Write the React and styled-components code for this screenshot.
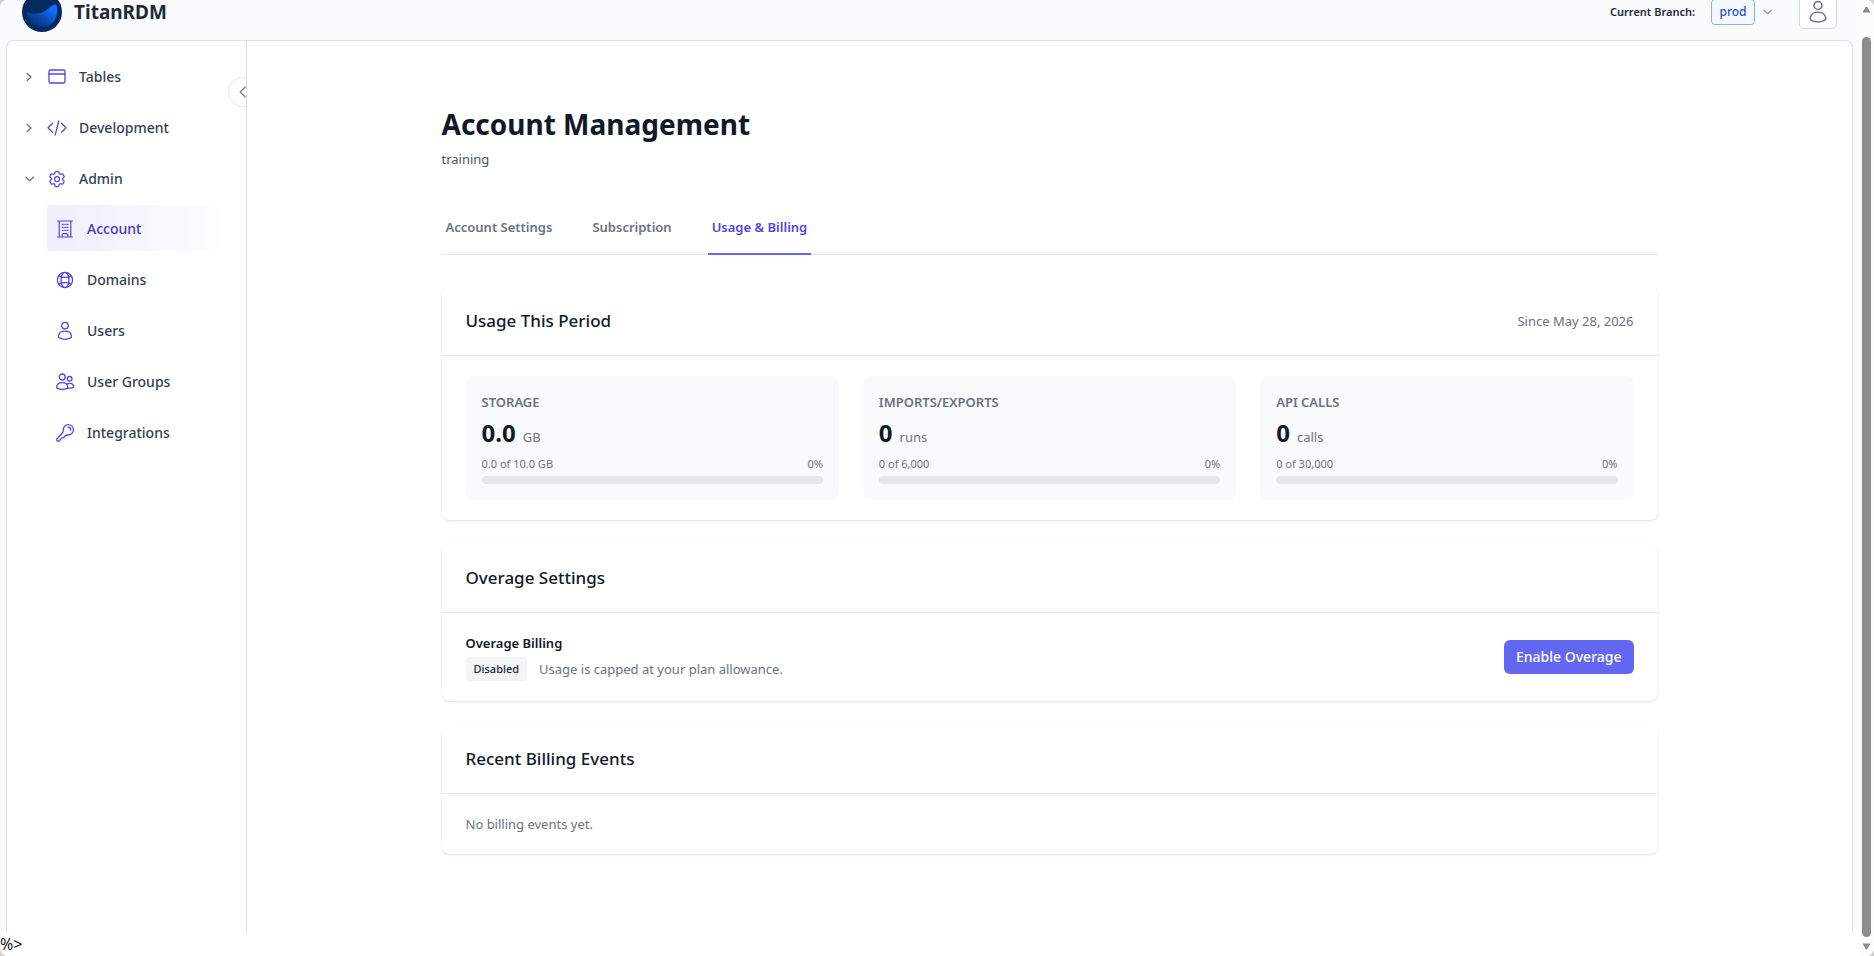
import React from "react";
import styled, { createGlobalStyle, css } from "styled-components";

const GlobalStyle = createGlobalStyle`
  *, *::before, *::after { box-sizing: border-box; }
  body {
    margin: 0;
    background: #cfcfd1;
    color: #111827;
    font-family: "Segoe UI", "Noto Sans", sans-serif;
    font-size: 13px;
    line-height: 20px;
  }
  h1, h2, h3, p, ul { margin: 0; padding: 0; }
  ul { list-style: none; }
  button { font: inherit; color: inherit; background: none; border: 0; padding: 0; cursor: pointer; }
  a { color: inherit; text-decoration: none; }
  svg { display: block; flex: none; }
`;

const labelText = css`
  font-size: 13px;
  font-weight: 600;
  line-height: 20px;
`;

/* Page frame */
const Window = styled.div`
  display: grid;
  grid-template-columns: minmax(0, 1fr) 15px;
  min-height: 100vh;
  border-radius: 8px;
  overflow: hidden;
  background: #fff;
`;

const Page = styled.div`
  display: flex;
  flex-direction: column;
`;

const ScrollTrack = styled.div`
  display: flex;
  flex-direction: column;
  align-items: center;
  gap: 24px;
  padding: 6px 0;
  background: #fcfcfc;
`;

const ScrollThumb = styled.div`
  flex: 1;
  width: 9px;
  border-radius: 5px;
  background: #8b8b8b;
`;

const ScrollBody = styled.div`
  flex: 1;
  display: flex;
  flex-direction: column;
  align-items: center;
  justify-content: space-between;
  gap: 6px;
`;

/* Header */
const Header = styled.header`
  display: flex;
  align-items: flex-end;
  height: 40px;
  padding: 0 22px 8px;
  overflow: hidden;
  background: #fafbfd;
`;

const HeaderRow = styled.div`
  flex: 1;
  display: flex;
  align-items: center;
  justify-content: space-between;
  height: 40px;
`;

const Brand = styled.a`
  display: flex;
  align-items: center;
  gap: 12px;
  font-size: 19px;
  font-weight: 700;
  line-height: 28px;
  color: #1f2937;
`;

const HeaderTools = styled.div`
  display: flex;
  align-items: center;
`;

const BranchLabel = styled.span`
  margin-right: 16px;
  font-size: 11px;
  font-weight: 600;
  color: #1f2937;
`;

const BranchButton = styled.button`
  display: flex;
  align-items: center;
  gap: 8px;
  margin-right: 26px;
  color: #9ca3af;
`;

const BranchName = styled.span`
  display: flex;
  align-items: center;
  justify-content: center;
  width: 44px;
  height: 26px;
  border: 1px solid #84b0f7;
  border-radius: 4px;
  background: #f5f9ff;
  color: #1d4ed8;
  font-size: 12px;
  font-weight: 500;
`;

const ProfileButton = styled.button`
  display: flex;
  align-items: center;
  justify-content: center;
  width: 38px;
  height: 34px;
  border: 1px solid #d1d5db;
  border-radius: 5px;
  background: #fff;
  color: #6b7280;
`;

/* Sidebar */
const Workspace = styled.div`
  flex: 1;
  display: flex;
  padding: 0 6px;
  background: #fafbfd;
`;

const Panel = styled.div`
  flex: 1;
  display: flex;
  border: 1px solid #dfe1e7;
  border-bottom: 0;
  border-radius: 8px 8px 0 0;
  background: #fff;
`;

const Sidebar = styled.nav`
  position: relative;
  flex: none;
  width: 240px;
  padding: 12px 11px 12px 0;
  border-right: 1px solid #dcdce4;
  overflow: hidden;
`;

const CollapseButton = styled.button`
  position: absolute;
  top: 36px;
  right: -12px;
  display: flex;
  align-items: center;
  justify-content: center;
  width: 30px;
  height: 30px;
  border: 1px solid #e2e4e9;
  border-radius: 50%;
  background: #fff;
  color: #7b818c;
`;

const NavList = styled.ul`
  display: flex;
  flex-direction: column;
  gap: 5px;
`;

const SubList = styled(NavList)`
  margin-top: 4px;
  margin-left: 40px;
`;

const navRow = css`
  display: flex;
  align-items: center;
  gap: 12px;
  width: 100%;
  height: 46px;
  border-radius: 4px;
  color: #374151;
  font-size: 14px;
  font-weight: 500;
  svg { color: #4f46e5; }
`;

const NavGroup = styled.button`
  ${navRow}
  padding: 2px 0 0 18px;
  text-align: left;
  svg:first-child { color: #6b7280; }
`;

const NavLink = styled.a`
  ${navRow}
  padding: 2px 0 0 8px;
  ${({ $active }) => $active && css`
    color: #4338ca;
    background: linear-gradient(to right, #eeeefd, #ffffff);
  `}
`;

/* Main content */
const Main = styled.main`
  flex: 1;
  min-width: 0;
  padding: 64px 32px;
`;

const Content = styled.div`
  max-width: 1216px;
  margin: 0 auto;
`;

const Title = styled.h1`
  font-size: 28px;
  font-weight: 700;
  line-height: 38px;
`;

const Subtitle = styled.p`
  margin-top: 6px;
  color: #4b5563;
`;

const Tabs = styled.div`
  display: flex;
  gap: 32px;
  margin: 32px 0;
  border-bottom: 1px solid #e5e7eb;
`;

const Tab = styled.button`
  ${labelText}
  margin-bottom: -1px;
  padding: 16px 4px;
  border-bottom: 2px solid ${({ $active }) => ($active ? "#6366f1" : "transparent")};
  color: ${({ $active }) => ($active ? "#4f46e5" : "#6b7280")};
`;

const CardStack = styled.div`
  display: flex;
  flex-direction: column;
  gap: 24px;
`;

const Card = styled.section`
  border-radius: 8px;
  background: #fff;
  box-shadow: 0 1px 3px rgba(0, 0, 0, 0.1), 0 1px 2px -1px rgba(0, 0, 0, 0.1);
`;

const CardHeader = styled.div`
  display: flex;
  align-items: center;
  justify-content: space-between;
  padding: 20px 24px;
  border-bottom: 1px solid #e5e7eb;
`;

const CardTitle = styled.h2`
  font-size: 17px;
  font-weight: 500;
  line-height: 28px;
`;

const Muted = styled.p`
  color: #6b7280;
`;

const CardBody = styled.div`
  padding: 20px 24px;
`;

const UsageGrid = styled(CardBody)`
  display: grid;
  grid-template-columns: repeat(3, minmax(0, 1fr));
  gap: 24px;
`;

const UsageTile = styled.div`
  padding: 16px;
  border-radius: 8px;
  background: #f9fafb;
  color: #6b7280;
`;

const UsageName = styled.h3`
  ${labelText}
  text-transform: uppercase;
`;

const UsageValue = styled.p`
  display: flex;
  align-items: baseline;
  gap: 7px;
  margin-top: 4px;
  line-height: 34px;
`;

const UsageNumber = styled.strong`
  color: #111827;
  font-size: 24px;
  font-weight: 700;
`;

const UsageQuota = styled.p`
  display: flex;
  justify-content: space-between;
  margin: 2px 0 4px;
  font-size: 11px;
  line-height: 16px;
`;

const Meter = styled.div`
  height: 8px;
  border-radius: 4px;
  background: #e5e7eb;
  overflow: hidden;
`;

const MeterFill = styled.div`
  height: 100%;
  background: #6366f1;
`;

const OverageBody = styled(CardBody)`
  display: flex;
  align-items: center;
  justify-content: space-between;
`;

const OverageName = styled.h3`
  ${labelText}
`;

const OverageStatus = styled.div`
  display: flex;
  align-items: center;
  gap: 12px;
  margin-top: 4px;
`;

const Badge = styled.span`
  padding: 4px 8px;
  border-radius: 4px;
  background: #f3f4f6;
  color: #1f2937;
  font-size: 11px;
  font-weight: 500;
  line-height: 16px;
`;

const PrimaryButton = styled.button`
  padding: 7px 12px;
  border-radius: 6px;
  background: #6366f1;
  color: #fff;
  font-size: 14px;
  font-weight: 500;
  line-height: 20px;
`;

const Footer = styled.footer`
  height: 24px;
  font-size: 16px;
  line-height: 24px;
`;

/* Icons */
const Glyph = ({ size = 20, box = 20, weight = 1.3, children }) => (
  <svg width={size} height={size} viewBox={`0 0 ${box} ${box}`} fill="none" stroke="currentColor"
    strokeWidth={weight} strokeLinecap="round" strokeLinejoin="round" aria-hidden="true">
    {children}
  </svg>
);

const ChevronRight = () => <Glyph size={10} box={10}><path d="M2.2 1.5 6 5 2.2 8.5" /></Glyph>;
const ChevronDown = () => <Glyph size={10} box={10}><path d="M1 3.2 4.700 6.800 8.400 3.200" /></Glyph>;
const ChevronLeft = () => <Glyph size={12} box={12}><path d="M8.2 1 3.2 6 8.2 11" /></Glyph>;

const TableIcon = () => (
  <Glyph><rect x="2" y="3" width="16" height="13" rx="1.6" /><path d="M2 7h16" /></Glyph>
);
const CodeIcon = () => (
  <Glyph><path d="M5.6 5.2 1 9.8l4.6 4.6M14.4 5.2 19 9.8l-4.6 4.6M11.8 3 8.2 16.8" /></Glyph>
);
const GearIcon = () => (
  <Glyph box={24} weight={1.5}>
    <path d="M9.594 3.94c.09-.542.56-.94 1.11-.94h2.593c.55 0 1.02.398 1.11.94l.213 1.281c.063.374.313.686.645.87.074.04.147.083.22.127.325.196.72.257 1.075.124l1.217-.456a1.125 1.125 0 0 1 1.37.49l1.296 2.247a1.125 1.125 0 0 1-.26 1.431l-1.003.827c-.293.241-.438.613-.43.992a7.7 7.7 0 0 1 0 .255c-.008.378.137.75.43.991l1.004.827c.424.35.534.955.26 1.43l-1.298 2.247a1.125 1.125 0 0 1-1.369.491l-1.217-.456c-.355-.133-.75-.072-1.076.124a6.5 6.5 0 0 1-.22.128c-.331.183-.581.495-.644.869l-.213 1.281c-.09.543-.56.94-1.11.94h-2.594c-.55 0-1.019-.398-1.11-.94l-.213-1.281c-.062-.374-.312-.686-.644-.87a6.5 6.5 0 0 1-.22-.127c-.325-.196-.72-.257-1.076-.124l-1.217.456a1.125 1.125 0 0 1-1.369-.49l-1.297-2.247a1.125 1.125 0 0 1 .26-1.431l1.004-.827c.292-.24.437-.613.43-.991a7 7 0 0 1 0-.255c.007-.38-.138-.751-.43-.992l-1.004-.827a1.125 1.125 0 0 1-.26-1.43l1.297-2.247a1.125 1.125 0 0 1 1.37-.491l1.216.456c.356.133.751.072 1.076-.124.072-.044.146-.086.22-.128.332-.183.582-.495.644-.869z" />
    <circle cx="12" cy="12" r="3" />
  </Glyph>
);
const BuildingIcon = () => (
  <Glyph weight={1.2}>
    <path d="M2.6 2h14.8M2.6 18h14.8M4.2 2v16M15.8 2v16M7.2 18v-2.2a1.2 1.2 0 0 1 1.2-1.2h3.2a1.2 1.2 0 0 1 1.2 1.2V18" />
    <path d="M7.2 5.3h1M9.7 5.3h.8M12 5.3h1M7.2 8.3h1M9.7 8.3h.8M12 8.3h1M7.2 11.3h1M9.7 11.3h.8M12 11.3h1" />
  </Glyph>
);
const GlobeIcon = () => (
  <Glyph>
    <circle cx="10" cy="10" r="7.6" /><ellipse cx="10" cy="10" rx="4" ry="7.6" />
    <path d="M3.6 6.2c3.8 1.5 9 1.5 12.8 0M3.6 13.8c3.8-1.5 9-1.5 12.8 0" />
  </Glyph>
);
const UserIcon = ({ size }) => (
  <Glyph size={size}>
    <circle cx="10" cy="4.6" r="3.3" />
    <path d="M3.5 15.2c.2-3 2.9-5 6.5-5s6.3 2 6.500 5c.1 1.2-.4 1.6-1.4 2-2.8 1.2-7.4 1.200-10.200 0-1-.4-1.5-.8-1.400-2Z" />
  </Glyph>
);
const UsersIcon = () => (
  <Glyph>
    <circle cx="7.2" cy="5" r="3" />
    <path d="M1.7 15.3c.1-2.9 2.3-4.7 5.500-4.700s5.400 1.800 5.500 4.700c0 .8-.3 1.1-1.100 1.400-2.500.9-6.300.9-8.800 0-.8-.3-1.100-.6-1.100-1.400Z" />
    <circle cx="14.7" cy="6.8" r="2.3" />
    <path d="M12.2 12c.7-.5 1.500-.7 2.500-.7 2.300 0 3.800 1.200 3.900 3.200 0 1.200-1.800 1.800-5.900 1.700" />
  </Glyph>
);
const KeyIcon = () => (
  <Glyph>
    <path d="M8.200 7.600C8.200 4 10.200 1.600 13.200 1.600c3 0 5.200 2.200 5.200 5.200 0 3.300-2.700 5.400-5.900 5.200-1.200 0-2 .6-2.700 1.300l-1.300 1.400-2 .4-1.300 1.500-.9 1.300c-1 .7-2.600.3-2.600-.9 0-.7.3-1.200.8-1.700l4.600-4.800c.9-1 1.100-1.900 1.100-2.900Z" />
    <path d="M13 4.200c1.600 0 2.800 1.100 2.800 2.800" />
  </Glyph>
);

const Logo = () => (
  <svg width="40" height="40" viewBox="0 0 40 40" aria-hidden="true">
    <defs>
      <linearGradient id="wave" x1="0" y1="1" x2="1" y2="0">
        <stop offset="0.15" stopColor="#06306f" />
        <stop offset="0.8" stopColor="#0d6efd" />
      </linearGradient>
    </defs>
    <circle cx="20" cy="20" r="20" fill="#052a60" />
    <path d="M5 20c2 1.5 10 2.5 16 0 6-2.700 8-7 12-7.500 2-.2 2.300 3 2 8.500-.6 8-7 14-15 14C11.500 35 5.500 29 5 20Z" fill="url(#wave)" />
  </svg>
);

const ScrollArrow = ({ down }) => (
  <svg width="9" height="7" viewBox="0 0 9 7" aria-hidden="true">
    <path d={down ? "M.5 .5h8L5.3 6Q4.5 7 3.7 6Z" : "M.5 6.5h8L5.3 1Q4.5 0 3.7 1Z"} fill="#8b8b8b" />
  </svg>
);

const groups = [
  { name: "Tables", Icon: TableIcon },
  { name: "Development", Icon: CodeIcon },
  {
    name: "Admin",
    Icon: GearIcon,
    items: [
      { name: "Account", Icon: BuildingIcon, active: true },
      { name: "Domains", Icon: GlobeIcon },
      { name: "Users", Icon: UserIcon },
      { name: "User Groups", Icon: UsersIcon },
      { name: "Integrations", Icon: KeyIcon },
    ],
  },
];

const tabs = ["Account Settings", "Subscription", "Usage & Billing"];

const usage = [
  { name: "Storage", value: "0.0", unit: "GB", quota: "0.0 of 10.0 GB", percent: 0 },
  { name: "Imports/Exports", value: "0", unit: "runs", quota: "0 of 6,000", percent: 0 },
  { name: "API Calls", value: "0", unit: "calls", quota: "0 of 30,000", percent: 0 },
];

export default function App() {
  return (
    <>
      <GlobalStyle />
      <Window>
        <Page>
          <Header>
            <HeaderRow>
              <Brand href="#home"><Logo />TitanRDM</Brand>
              <HeaderTools>
                <BranchLabel id="branch-label">Current Branch:</BranchLabel>
                <BranchButton type="button" aria-labelledby="branch-label">
                  <BranchName>prod</BranchName>
                  <ChevronDown />
                </BranchButton>
                <ProfileButton type="button" aria-label="Profile"><UserIcon size={24} /></ProfileButton>
              </HeaderTools>
            </HeaderRow>
          </Header>
          <Workspace>
            <Panel>
              <Sidebar aria-label="Main">
                <NavList>
                  {groups.map(({ name, Icon, items }) => (
                    <li key={name}>
                      <NavGroup type="button" aria-expanded={Boolean(items)}>
                        {items ? <ChevronDown /> : <ChevronRight />}
                        <Icon />
                        {name}
                      </NavGroup>
                      {items && (
                        <SubList>
                          {items.map(({ name: label, Icon: ItemIcon, active }) => (
                            <li key={label}>
                              <NavLink href={`#${label}`} $active={active}><ItemIcon />{label}</NavLink>
                            </li>
                          ))}
                        </SubList>
                      )}
                    </li>
                  ))}
                </NavList>
                <CollapseButton type="button" aria-label="Collapse sidebar"><ChevronLeft /></CollapseButton>
              </Sidebar>
              <Main>
                <Content>
                  <Title>Account Management</Title>
                  <Subtitle>training</Subtitle>
                  <Tabs role="tablist">
                    {tabs.map((tab, i) => (
                      <Tab key={tab} type="button" role="tab" aria-selected={i === 2} $active={i === 2}>{tab}</Tab>
                    ))}
                  </Tabs>
                  <CardStack>
                    <Card>
                      <CardHeader>
                        <CardTitle>Usage This Period</CardTitle>
                        <Muted>Since May 28, 2026</Muted>
                      </CardHeader>
                      <UsageGrid>
                        {usage.map((u) => (
                          <UsageTile key={u.name}>
                            <UsageName>{u.name}</UsageName>
                            <UsageValue><UsageNumber>{u.value}</UsageNumber>{u.unit}</UsageValue>
                            <UsageQuota><span>{u.quota}</span><span>{u.percent}%</span></UsageQuota>
                            <Meter role="progressbar" aria-label={u.name} aria-valuenow={u.percent}>
                              <MeterFill style={{ width: `${u.percent}%` }} />
                            </Meter>
                          </UsageTile>
                        ))}
                      </UsageGrid>
                    </Card>
                    <Card>
                      <CardHeader><CardTitle>Overage Settings</CardTitle></CardHeader>
                      <OverageBody>
                        <div>
                          <OverageName>Overage Billing</OverageName>
                          <OverageStatus>
                            <Badge>Disabled</Badge>
                            <Muted>Usage is capped at your plan allowance.</Muted>
                          </OverageStatus>
                        </div>
                        <PrimaryButton type="button">Enable Overage</PrimaryButton>
                      </OverageBody>
                    </Card>
                    <Card>
                      <CardHeader><CardTitle>Recent Billing Events</CardTitle></CardHeader>
                      <CardBody><Muted>No billing events yet.</Muted></CardBody>
                    </Card>
                  </CardStack>
                </Content>
              </Main>
            </Panel>
          </Workspace>
          <Footer>%&gt;</Footer>
        </Page>
        <ScrollTrack aria-hidden="true">
          <ScrollArrow />
          <ScrollBody>
            <ScrollThumb />
            <ScrollArrow down />
          </ScrollBody>
        </ScrollTrack>
      </Window>
    </>
  );
}
